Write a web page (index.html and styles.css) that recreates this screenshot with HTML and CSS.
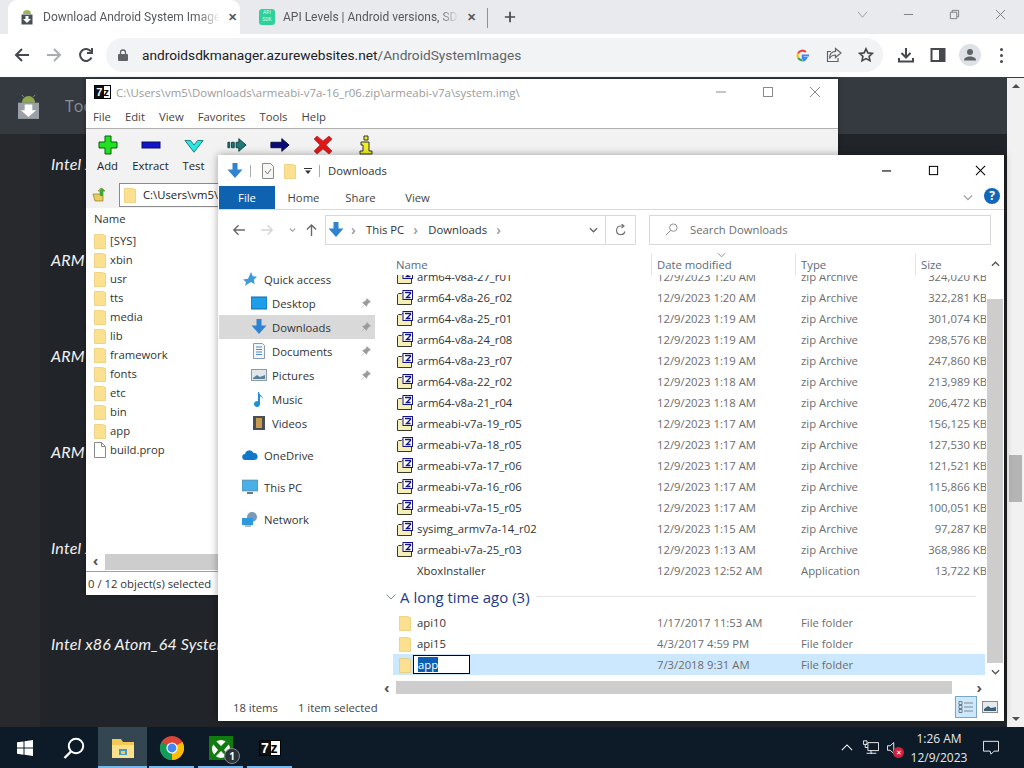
FILE: index.html
```html
<!DOCTYPE html>
<html lang="en">
<head>
    <meta charset="UTF-8">
    <title>Download Android System Images</title>
    <link rel="stylesheet" href="styles.css">
</head>
<body>
    <div class="screen">
        <header class="browser">
            <div class="tabstrip">
                <div class="tab tab-active">
                    <svg class="favicon" viewBox="0 0 16 16"><path d="M4 5a4 4 0 0 1 8 0z" fill="#9db65c"/><rect x="2.500" y="5.500" width="11" height="10" fill="#4a5058"/><path d="M6.500 7h3v3H12l-4 4-4-4h2.500z" fill="#fff"/></svg>
                    <span class="tab-title">Download Android System Images</span>
                    <span class="tab-close">✕</span>
                </div>
                <div class="tab tab-back">
                    <span class="api-icon">API<br>SDK</span>
                    <span class="tab-title">API Levels | Android versions, SDK</span>
                    <span class="tab-close">✕</span>
                </div>
                <span class="tab-sep"></span>
                <svg class="newtab" viewBox="0 0 14 14"><path d="M7 1v12M1 7h12" stroke="#45484c" stroke-width="2"/></svg>
                <div class="win-buttons">
                    <svg viewBox="0 0 12 12"><path d="M1 3l5 6 5-6" fill="none" stroke="#9a9b9e"/></svg>
                    <svg viewBox="0 0 12 12"><path d="M1 6h10" stroke="#77797c"/></svg>
                    <svg viewBox="0 0 12 12"><path d="M1.500 3.500h7v7h-7zM3.500 3.500v-2h7v7h-2" fill="none" stroke="#77797c"/></svg>
                    <svg viewBox="0 0 12 12"><path d="M1 1l10 10M11 1L1 11" stroke="#77797c"/></svg>
                </div>
            </div>
            <div class="toolbar">
                <svg class="nav" viewBox="0 0 16 16"><path d="M15 8H2M8 2L2 8l6 6" fill="none" stroke="#45484c" stroke-width="2"/></svg>
                <svg class="nav" viewBox="0 0 16 16"><path d="M1 8h13M8 2l6 6-6 6" fill="none" stroke="#abaeb1" stroke-width="2"/></svg>
                <svg class="nav" viewBox="0 0 16 16"><path d="M13.500 10.500A6 6 0 1 1 13 4.500M14 1v5H9" fill="none" stroke="#45484c" stroke-width="2"/></svg>
                <div class="omnibox">
                    <svg class="lock" viewBox="0 0 10 12"><path d="M2.500 5V3.500a2.500 2.500 0 0 1 5 0V5" fill="none" stroke="#5f6368" stroke-width="1.300"/><rect y="5" width="10" height="7" rx="1" fill="#5f6368"/></svg>
                    <span class="url"><b>androidsdkmanager.azurewebsites.net</b>/AndroidSystemImages</span>
                    <svg class="g-logo" viewBox="0 0 16 16"><path d="M15 8H8.200v2.600h3.900A4.200 4.200 0 0 1 8 13.200" fill="none" stroke="#4285f4" stroke-width="2.200"/><path d="M8 13.200A5.200 5.200 0 0 1 3.300 10.300" fill="none" stroke="#34a853" stroke-width="2.200"/><path d="M3.300 10.300a5.200 5.200 0 0 1 0-4.600" fill="none" stroke="#fbbc05" stroke-width="2.200"/><path d="M3.300 5.700A5.200 5.200 0 0 1 11.600 4.300" fill="none" stroke="#ea4335" stroke-width="2.200"/></svg>
                    <svg class="omni-icon" viewBox="0 0 16 16"><path d="M9.500 1.500L15 6l-5.500 4.500V8C6 8 4.500 9.500 3.500 11.500 3.500 7 6 4.500 9.500 4.300zM12 11v3.500H1.500V4.500H5" fill="none" stroke="#5f6368" stroke-width="1.200"/></svg>
                    <svg class="omni-icon" viewBox="0 0 16 16"><path d="M8 1.800l1.900 4.100 4.500.5-3.300 3 .9 4.400L8 11.600l-4 2.200.9-4.400-3.300-3 4.500-.5z" fill="none" stroke="#45484c" stroke-width="1.600"/></svg>
                </div>
                <svg class="tool tool-first" viewBox="0 0 16 16"><path d="M8 1v9M3.500 6L8 10.500 12.500 6M1 11v3.500h14V11" fill="none" stroke="#45484c" stroke-width="2"/></svg>
                <svg class="tool" viewBox="0 0 16 16"><rect x="1.500" y="2" width="13" height="12" fill="none" stroke="#45484c" stroke-width="2"/><rect x="9" y="2" width="6" height="12" fill="#45484c"/></svg>
                <span class="avatar"><svg viewBox="0 0 16 16"><circle cx="8" cy="5" r="3" fill="#5f6368"/><path d="M2 13.500c0-3 3-4 6-4s6 1 6 4z" fill="#5f6368"/></svg></span>
                <span class="dots"><i></i><i></i><i></i></span>
            </div>
        </header>

        <main class="page">
            <div class="page-head">
                <svg class="brand" viewBox="0 0 22 26"><path d="M4 9a7 7 0 0 1 14 0z" fill="#8fa84f"/><path d="M6 3L4 1M16 3l2-2" stroke="#8fa84f"/><rect y="9" width="22" height="17" fill="#9aa0a6"/><path d="M7 11h8v6h4l-8 7-8-7h4z" fill="#fff"/></svg>
                <span class="brand-link">Tools</span>
            </div>
            <ul class="image-list">
                <li>Intel x86 Atom System Images</li>
                <li>ARM 64 v8a System Images</li>
                <li>ARM EABI v7a System Images</li>
                <li>ARM EABI System Images</li>
                <li>Intel x86 Atom System Images</li>
                <li>Intel x86 Atom_64 System Images</li>
            </ul>
        </main>
        <div class="page-scroll">
            <span class="arrow-up"></span>
            <span class="page-thumb"></span>
            <span class="arrow-down"></span>
        </div>

        <!-- 7-Zip window -->
        <section class="sevenzip">
            <div class="sz-title">
                <span class="logo-7z small"><span>7</span>z</span>
                <span class="sz-path">C:\Users\vm5\Downloads\armeabi-v7a-16_r06.zip\armeabi-v7a\system.img\</span>
                <div class="sz-buttons">
                    <svg viewBox="0 0 12 12"><path d="M1 6h10" stroke="#8a8a8a"/></svg>
                    <svg viewBox="0 0 12 12"><rect x="1.500" y="1.500" width="9" height="9" fill="none" stroke="#8a8a8a"/></svg>
                    <svg viewBox="0 0 12 12"><path d="M1 1l10 10M11 1L1 11" stroke="#8a8a8a"/></svg>
                </div>
            </div>
            <div class="sz-menu">
                <span>File</span><span>Edit</span><span>View</span><span>Favorites</span><span>Tools</span><span>Help</span>
            </div>
            <div class="sz-tools">
                <div class="sz-tool"><svg viewBox="0 0 20 20"><path d="M7 1h6v6h6v6h-6v6H7v-6H1V7h6z" fill="#22e022" stroke="#0b5e0b"/></svg><span>Add</span></div>
                <div class="sz-tool"><svg viewBox="0 0 20 20"><rect x="1" y="7" width="18" height="6" fill="#1212c8" stroke="#0a0a70"/></svg><span>Extract</span></div>
                <div class="sz-tool"><svg viewBox="0 0 22 20"><path d="M1 5h6l4 5 4-5h6L11 18z" fill="#2ee6e0" stroke="#0c7a78"/></svg><span>Test</span></div>
                <div class="sz-tool"><svg viewBox="0 0 22 20"><path d="M1 7h2v6H1zM5 7h3v6H5zM10 7h3V3l8 7-8 7v-4h-3z" fill="#1f7a78" stroke="#0d3f3e"/></svg></div>
                <div class="sz-tool"><svg viewBox="0 0 22 20"><path d="M1 7h12V3l8 7-8 7v-4H1z" fill="#0a0a78" stroke="#05053f"/></svg></div>
                <div class="sz-tool"><svg viewBox="0 0 20 20"><path d="M4 1l6 5 6-5 3 3-6 6 6 6-3 3-6-5-6 5-3-3 6-6-6-6z" fill="#e01818" stroke="#8c0e0e" stroke-width=".5"/></svg></div>
                <div class="sz-tool"><svg viewBox="0 0 14 20"><path d="M5 1h4v4H5zM2 7h8v9h3v3H1v-3h3v-6H2z" fill="#f0f020" stroke="#333"/></svg></div>
            </div>
            <div class="sz-address">
                <svg class="sz-up" viewBox="0 0 14 16"><path d="M1 7h7V4H6l3-3 4 3h-2v10H3z" fill="#e9cc5c" stroke="#7a6a1c" stroke-width=".6"/><path d="M8 3l2-2 3 3h-2v5H8z" fill="#38a838"/></svg>
                <div class="sz-pathbox">
                    <svg class="folder" viewBox="0 0 12 16"><use href="#folder-shape"/></svg>
                    <span>C:\Users\vm5\Downloads</span>
                </div>
            </div>
            <div class="sz-list">
                <div class="sz-head">Name</div>
                <div class="sz-row"><svg class="folder" viewBox="0 0 12 16"><use href="#folder-shape"/></svg>[SYS]</div>
                <div class="sz-row"><svg class="folder" viewBox="0 0 12 16"><use href="#folder-shape"/></svg>xbin</div>
                <div class="sz-row"><svg class="folder" viewBox="0 0 12 16"><use href="#folder-shape"/></svg>usr</div>
                <div class="sz-row"><svg class="folder" viewBox="0 0 12 16"><use href="#folder-shape"/></svg>tts</div>
                <div class="sz-row"><svg class="folder" viewBox="0 0 12 16"><use href="#folder-shape"/></svg>media</div>
                <div class="sz-row"><svg class="folder" viewBox="0 0 12 16"><use href="#folder-shape"/></svg>lib</div>
                <div class="sz-row"><svg class="folder" viewBox="0 0 12 16"><use href="#folder-shape"/></svg>framework</div>
                <div class="sz-row"><svg class="folder" viewBox="0 0 12 16"><use href="#folder-shape"/></svg>fonts</div>
                <div class="sz-row"><svg class="folder" viewBox="0 0 12 16"><use href="#folder-shape"/></svg>etc</div>
                <div class="sz-row"><svg class="folder" viewBox="0 0 12 16"><use href="#folder-shape"/></svg>bin</div>
                <div class="sz-row"><svg class="folder" viewBox="0 0 12 16"><use href="#folder-shape"/></svg>app</div>
                <div class="sz-row"><svg class="folder" viewBox="0 0 12 16"><path d="M.500.500h7l4 4v11h-11z" fill="#fff" stroke="#8a8a8a"/><path d="M7.500.500v4h4" fill="none" stroke="#8a8a8a"/></svg>build.prop</div>
            </div>
            <div class="sz-hscroll"><span class="hs-left">‹</span><span class="hs-thumb"></span></div>
            <div class="sz-status">0 / 12 object(s) selected</div>
        </section>

        <!-- Explorer window -->
        <section class="explorer">
            <div class="ex-title">
                <svg class="qa-down" viewBox="0 0 16 16"><use href="#down-arrow"/></svg>
                <span class="qa-sep"></span>
                <svg class="qa-check" viewBox="0 0 12 16"><path d="M.500.500h8l3 3v12h-11z" fill="#f6f6f4" stroke="#8a8a8a"/><path d="M3 8l2.500 3L9 6" fill="none" stroke="#7a7a7a"/></svg>
                <svg class="qa-folder" viewBox="0 0 12 16"><use href="#folder-shape"/></svg>
                <svg class="qa-more" viewBox="0 0 8 8"><path d="M0 1.500h8" stroke="#333"/><path d="M1 3.500h6L4 7z" fill="#333"/></svg>
                <span class="qa-sep"></span>
                <span class="ex-name">Downloads</span>
                <div class="ex-buttons">
                    <svg viewBox="0 0 12 12"><path d="M1 6.500h10" stroke="#000" stroke-width="1.200"/></svg>
                    <svg viewBox="0 0 12 12"><rect x="1.500" y="1.500" width="9" height="9" fill="none" stroke="#000" stroke-width="1.100"/></svg>
                    <svg viewBox="0 0 12 12"><path d="M1 1l10 10M11 1L1 11" stroke="#000" stroke-width="1.100"/></svg>
                </div>
            </div>
            <div class="ex-ribbon">
                <span class="rb-file">File</span>
                <span class="rb-tab">Home</span>
                <span class="rb-tab">Share</span>
                <span class="rb-tab">View</span>
                <svg class="rb-chev" viewBox="0 0 12 8"><path d="M1 1.500l5 5 5-5" fill="none" stroke="#9a9a9a" stroke-width="1.500"/></svg>
                <span class="rb-help">?</span>
            </div>
            <div class="ex-address">
                <svg class="ex-nav" viewBox="0 0 14 12"><path d="M14 6H2M7 1L2 6l5 5" fill="none" stroke="#6a6a6a" stroke-width="1.500"/></svg>
                <svg class="ex-nav" viewBox="0 0 14 12"><path d="M0 6h12M7 1l5 5-5 5" fill="none" stroke="#d4d4d4" stroke-width="1.500"/></svg>
                <svg class="ex-recent" viewBox="0 0 8 6"><path d="M1 1.500l3 3 3-3" fill="none" stroke="#9a9a9a" stroke-width="1.300"/></svg>
                <svg class="ex-nav ex-upbtn" viewBox="0 0 12 14"><path d="M6 14V2M1 7l5-5 5 5" fill="none" stroke="#6a6a6a" stroke-width="1.500"/></svg>
                <div class="ex-crumbs">
                    <svg class="crumb-icon" viewBox="0 0 16 16"><use href="#down-arrow"/></svg>
                    <span class="crumb-sep">›</span>
                    <span>This PC</span>
                    <span class="crumb-sep">›</span>
                    <span>Downloads</span>
                    <span class="crumb-sep">›</span>
                    <svg class="crumb-drop" viewBox="0 0 10 6"><path d="M1 1l4 4 4-4" fill="none" stroke="#666" stroke-width="1.500"/></svg>
                </div>
                <div class="ex-refresh"><svg viewBox="0 0 12 12"><path d="M10 7.500A4.300 4.300 0 1 1 6 2h2M6.500 0l2.500 2-2.500 2" fill="none" stroke="#777" stroke-width="1.200"/></svg></div>
                <div class="ex-search">
                    <svg viewBox="0 0 14 14"><circle cx="9" cy="5" r="4" fill="none" stroke="#888"/><path d="M6 8l-5 5" stroke="#888"/></svg>
                    <span>Search Downloads</span>
                </div>
            </div>
            <div class="ex-body">
                <nav class="ex-nav-pane">
                    <div class="nav-row nav-top"><svg class="nav-ico" viewBox="0 0 16 16"><path d="M9 1l1.800 4.200 4.200.5-3.200 3 .9 4.500L9 11l-4 2.400L3 15l1-4-3-2.500 5-.8z" fill="#3d9bd9"/></svg>Quick access</div>
                    <div class="nav-row nav-sub"><svg class="nav-ico" viewBox="0 0 16 16"><rect y="2" width="16" height="12" fill="#1e9ee8" stroke="#0b6fb0"/></svg>Desktop<svg class="pin" viewBox="0 0 10 10"><use href="#pin-shape"/></svg></div>
                    <div class="nav-row nav-sub is-current"><svg class="nav-ico" viewBox="0 0 16 16"><use href="#down-arrow"/></svg>Downloads<svg class="pin" viewBox="0 0 10 10"><use href="#pin-shape"/></svg></div>
                    <div class="nav-row nav-sub"><svg class="nav-ico" viewBox="0 0 16 16"><path d="M2.500.500h9l2 2v13h-11z" fill="#f2f6fa" stroke="#8a9aa8"/><path d="M5 4h6M5 6.500h6M5 9h6M5 11.500h6" stroke="#4a90c8"/></svg>Documents<svg class="pin" viewBox="0 0 10 10"><use href="#pin-shape"/></svg></div>
                    <div class="nav-row nav-sub"><svg class="nav-ico" viewBox="0 0 16 16"><rect x=".5" y="2.500" width="15" height="11" fill="#dfe7ec" stroke="#8a9aa8"/><path d="M2 11l4-3 3 2 5-2v4H2z" fill="#5a7f96"/></svg>Pictures<svg class="pin" viewBox="0 0 10 10"><use href="#pin-shape"/></svg></div>
                    <div class="nav-row nav-sub"><svg class="nav-ico" viewBox="0 0 16 16"><path d="M8 1c0 3 4 4 4 7-1-2-2-2.500-3-2.500V13a3 3 0 1 1-2-2.800V1z" fill="#1e90d8"/></svg>Music</div>
                    <div class="nav-row nav-sub"><svg class="nav-ico" viewBox="0 0 16 16"><rect x="2" y="1" width="12" height="14" fill="#4a4f55"/><rect x="5" y="3" width="6" height="10" fill="#c89a50"/></svg>Videos</div>
                    <div class="nav-row nav-top nav-gap"><svg class="nav-ico" viewBox="0 0 16 16"><path d="M3.500 13a3 3 0 0 1-.5-6 4.500 4.500 0 0 1 8.500-1A3.500 3.500 0 0 1 12.500 13z" fill="#0f78c8"/></svg>OneDrive</div>
                    <div class="nav-row nav-top nav-gap"><svg class="nav-ico" viewBox="0 0 16 16"><rect y="1" width="16" height="11" fill="#4ab0e8" stroke="#6a7a88" stroke-width=".6"/><path d="M5 14h6" stroke="#6a7a88" stroke-width="2"/></svg>This PC</div>
                    <div class="nav-row nav-top nav-gap"><svg class="nav-ico" viewBox="0 0 16 16"><circle cx="10" cy="6" r="5" fill="#7a9ab8"/><rect y="7" width="11" height="7" fill="#2f97dc"/><path d="M3 15h6" stroke="#6a7a88"/></svg>Network</div>
                </nav>
                <div class="ex-files">
                    <div class="col-head">
                        <span class="col-name">Name</span>
                        <span class="col-date">Date modified</span>
                        <span class="col-type">Type</span>
                        <span class="col-size">Size</span>
                    </div>
                    <svg class="col-sort" viewBox="0 0 10 6"><path d="M1 1l4 4 4-4" fill="none" stroke="#888"/></svg>
                    <div class="file-view">
                        <div class="file-row clip-top"><span class="file-name"><svg class="zip-icon" viewBox="0 0 16 16"><use href="#zip-shape"/></svg>arm64-v8a-27_r01</span><span>12/9/2023 1:20 AM</span><span>zip Archive</span><span class="file-size">324,020 KB</span></div>
                        <div class="file-row"><span class="file-name"><svg class="zip-icon" viewBox="0 0 16 16"><use href="#zip-shape"/></svg>arm64-v8a-26_r02</span><span>12/9/2023 1:20 AM</span><span>zip Archive</span><span class="file-size">322,281 KB</span></div>
                        <div class="file-row"><span class="file-name"><svg class="zip-icon" viewBox="0 0 16 16"><use href="#zip-shape"/></svg>arm64-v8a-25_r01</span><span>12/9/2023 1:19 AM</span><span>zip Archive</span><span class="file-size">301,074 KB</span></div>
                        <div class="file-row"><span class="file-name"><svg class="zip-icon" viewBox="0 0 16 16"><use href="#zip-shape"/></svg>arm64-v8a-24_r08</span><span>12/9/2023 1:19 AM</span><span>zip Archive</span><span class="file-size">298,576 KB</span></div>
                        <div class="file-row"><span class="file-name"><svg class="zip-icon" viewBox="0 0 16 16"><use href="#zip-shape"/></svg>arm64-v8a-23_r07</span><span>12/9/2023 1:19 AM</span><span>zip Archive</span><span class="file-size">247,860 KB</span></div>
                        <div class="file-row"><span class="file-name"><svg class="zip-icon" viewBox="0 0 16 16"><use href="#zip-shape"/></svg>arm64-v8a-22_r02</span><span>12/9/2023 1:18 AM</span><span>zip Archive</span><span class="file-size">213,989 KB</span></div>
                        <div class="file-row"><span class="file-name"><svg class="zip-icon" viewBox="0 0 16 16"><use href="#zip-shape"/></svg>arm64-v8a-21_r04</span><span>12/9/2023 1:18 AM</span><span>zip Archive</span><span class="file-size">206,472 KB</span></div>
                        <div class="file-row"><span class="file-name"><svg class="zip-icon" viewBox="0 0 16 16"><use href="#zip-shape"/></svg>armeabi-v7a-19_r05</span><span>12/9/2023 1:17 AM</span><span>zip Archive</span><span class="file-size">156,125 KB</span></div>
                        <div class="file-row"><span class="file-name"><svg class="zip-icon" viewBox="0 0 16 16"><use href="#zip-shape"/></svg>armeabi-v7a-18_r05</span><span>12/9/2023 1:17 AM</span><span>zip Archive</span><span class="file-size">127,530 KB</span></div>
                        <div class="file-row"><span class="file-name"><svg class="zip-icon" viewBox="0 0 16 16"><use href="#zip-shape"/></svg>armeabi-v7a-17_r06</span><span>12/9/2023 1:17 AM</span><span>zip Archive</span><span class="file-size">121,521 KB</span></div>
                        <div class="file-row"><span class="file-name"><svg class="zip-icon" viewBox="0 0 16 16"><use href="#zip-shape"/></svg>armeabi-v7a-16_r06</span><span>12/9/2023 1:17 AM</span><span>zip Archive</span><span class="file-size">115,866 KB</span></div>
                        <div class="file-row"><span class="file-name"><svg class="zip-icon" viewBox="0 0 16 16"><use href="#zip-shape"/></svg>armeabi-v7a-15_r05</span><span>12/9/2023 1:17 AM</span><span>zip Archive</span><span class="file-size">100,051 KB</span></div>
                        <div class="file-row"><span class="file-name"><svg class="zip-icon" viewBox="0 0 16 16"><use href="#zip-shape"/></svg>sysimg_armv7a-14_r02</span><span>12/9/2023 1:15 AM</span><span>zip Archive</span><span class="file-size">97,287 KB</span></div>
                        <div class="file-row"><span class="file-name"><svg class="zip-icon" viewBox="0 0 16 16"><use href="#zip-shape"/></svg>armeabi-v7a-25_r03</span><span>12/9/2023 1:13 AM</span><span>zip Archive</span><span class="file-size">368,986 KB</span></div>
                        <div class="file-row"><span class="file-name"><span class="no-icon"></span>XboxInstaller</span><span>12/9/2023 12:52 AM</span><span>Application</span><span class="file-size">13,722 KB</span></div>
                        <div class="group-head"><svg viewBox="0 0 10 6"><path d="M.5.5L5 5 9.500.5" fill="none" stroke="#7a8a9a"/></svg>A long time ago (3)<i></i></div>
                        <div class="file-row"><span class="file-name"><svg class="folder" viewBox="0 0 12 16"><use href="#folder-shape"/></svg>api10</span><span>1/17/2017 11:53 AM</span><span>File folder</span><span></span></div>
                        <div class="file-row"><span class="file-name"><svg class="folder" viewBox="0 0 12 16"><use href="#folder-shape"/></svg>api15</span><span>4/3/2017 4:59 PM</span><span>File folder</span><span></span></div>
                        <div class="file-row is-selected"><span class="file-name"><svg class="folder" viewBox="0 0 12 16"><use href="#folder-shape"/></svg><span class="rename-box"><mark>app</mark></span></span><span>7/3/2018 9:31 AM</span><span>File folder</span><span></span></div>
                    </div>
                    <div class="ex-hscroll">
                        <span class="hs-arrow">‹</span><span class="ex-hthumb"></span><span class="hs-arrow hs-right">›</span>
                    </div>
                </div>
                <div class="ex-vscroll">
                    <svg viewBox="0 0 10 6"><path d="M1 5l4-4 4 4" fill="none" stroke="#555" stroke-width="1.500"/></svg>
                    <span class="ex-vthumb"></span>
                    <svg viewBox="0 0 10 6"><path d="M1 1l4 4 4-4" fill="none" stroke="#555" stroke-width="1.500"/></svg>
                </div>
            </div>
            <div class="ex-status">
                <span>18 items</span>
                <span class="st-selected">1 item selected</span>
                <span class="view-btn view-on"><svg viewBox="0 0 16 14"><path d="M1 1.500h3v3H1zM1 5.500h3v3H1zM1 9.500h3v3H1z" fill="none" stroke="#555" stroke-width=".7"/><path d="M6 3h9M6 7h9M6 11h9" stroke="#888"/></svg></span>
                <span class="view-btn"><svg viewBox="0 0 16 14"><rect x=".5" y="1.500" width="15" height="11" fill="#e6eaee" stroke="#8a8a8a"/><path d="M2 9l4-3 3 2 5-1v4H2z" fill="#3c5f78"/></svg></span>
            </div>
        </section>

        <footer class="taskbar">
            <span class="tb-btn"><svg class="tb-win" viewBox="0 0 16 16"><path d="M0 2.300l6.500-.9v6.200H0zM7.500 1.300L16 0v7.600H7.500zM0 8.500h6.500v6.200L0 13.800zM7.500 8.500H16V16l-8.500-1.300z" fill="#fff"/></svg></span>
            <span class="tb-btn"><svg class="tb-search" viewBox="0 0 22 22"><circle cx="13" cy="9" r="7.200" fill="none" stroke="#fff" stroke-width="2"/><path d="M8 14.500L1.500 21" stroke="#fff" stroke-width="2.400"/></svg></span>
            <span class="tb-btn is-open is-active"><svg viewBox="0 0 24 22"><path d="M1 2h9l2 3h11v16H1z" fill="#f2c955"/><rect x="1" y="8" width="22" height="13" fill="#ffe08a"/><rect x="8" y="12" width="8" height="6" fill="#3f9bd0"/><rect x="10" y="14" width="4" height="3" fill="#f2c955"/></svg></span>
            <span class="tb-btn is-open"><svg viewBox="0 0 24 24"><circle cx="12" cy="12" r="12" fill="#db4437"/><path d="M12 12L22.400 6A12 12 0 0 1 12 24z" fill="#fbbc05"/><path d="M12 12L12 24A12 12 0 0 1 1.600 6z" fill="#0f9d58"/><circle cx="12" cy="12" r="5.600" fill="#fff"/><circle cx="12" cy="12" r="4.400" fill="#4285f4"/></svg></span>
            <span class="tb-btn is-open"><svg viewBox="0 0 24 24"><rect width="24" height="24" fill="#107c10"/><circle cx="12" cy="13" r="9" fill="#fff"/><path d="M12 10L7 5l-3 3 5 6-5 6h3l5-5 5 5h3l-5-6 5-6-3-3z" fill="#107c10"/></svg><span class="tb-badge">1</span></span>
            <span class="tb-btn is-open"><span class="logo-7z large"><span>7</span>z</span></span>
            <div class="tray">
                <svg class="tray-up" viewBox="0 0 14 8"><path d="M1 7l6-6 6 6" fill="none" stroke="#fff" stroke-width="1.200"/></svg>
                <svg class="tray-net" viewBox="0 0 18 16"><path d="M5.500 2.500h12v9h-12zM0.500 .5h4v4h-4zM2.500 4.500V8h3M9 11.500v3h6M4 14.500h6" fill="none" stroke="#fff"/></svg>
                <span class="tray-sound"><svg viewBox="0 0 10 14"><path d="M.5 4.500h3l4-3.500v12l-4-3.500h-3z" fill="none" stroke="#fff"/></svg><span class="mute">✕</span></span>
                <div class="clock"><span>1:26 AM</span><span>12/9/2023</span></div>
                <svg class="tray-notes" viewBox="0 0 18 16"><path d="M.5.500h17v11h-5l-3.500 3.500-1-3.500h-7.500z" fill="none" stroke="#fff"/></svg>
            </div>
        </footer>
    </div>

    <svg class="defs" width="0" height="0">
        <defs>
            <g id="folder-shape"><path d="M.5 1.500h7.500l3.500 1v13H.5z" fill="#fbe08f" stroke="#e8c76a" stroke-width=".7"/></g>
            <g id="down-arrow"><path d="M5.500 0h5v6.500h5L8 15 .5 6.500h5z" fill="#2f83d0"/></g>
            <g id="pin-shape"><path d="M6 .5L9.500 4 8 4.500 6 7 5.500 8.500 1.500 4.500 3 4l2.500-2zM3 7L.5 9.500" fill="#9a9a9a" stroke="#9a9a9a" stroke-width=".5"/></g>
            <g id="zip-shape"><path d="M.5 4.500l1-1h3l1-1h9v12h-14z" fill="#f6f0b8" stroke="#3a3a2a"/><rect x="6" y="0.500" width="9.500" height="9" fill="#fff" stroke="#16168c"/><path d="M8 2.500h5.500v1L9.500 7.500h4" fill="none" stroke="#16168c" stroke-width="1.300"/></g>
        </defs>
    </svg>
</body>
</html>
```

FILE: styles.css
```css
* {
    margin: 0;
    padding: 0;
    box-sizing: border-box;
}

html, body {
    height: 768px;
    overflow: hidden;
}

body {
    font-family: "Open Sans", "Noto Sans", sans-serif;
    font-size: 11.3px;
    color: #222;
    background: #212529;
}

.screen {
    position: relative;
    width: 1024px;
    height: 768px;
    overflow: hidden;
}

.defs {
    position: absolute;
}

/* browser chrome */
.browser {
    position: absolute;
    top: 0;
    left: 0;
    width: 1024px;
    height: 78px;
    background: #fff;
    border-bottom: 1px solid #3a3d41;
}

.tabstrip {
    display: flex;
    align-items: flex-end;
    height: 34px;
    background: #e8eaed;
    padding-left: 8px;
}

.tab {
    display: flex;
    align-items: center;
    width: 232px;
    height: 34px;
    padding: 0 1px 0 11px;
    gap: 6px;
    color: #55585c;
    font-family: "Roboto", sans-serif;
    font-size: 12px;
}

.tab-back {
    width: 247px;
    padding: 0 9px 0 19px;
}

.tab-active {
    background: #fff;
    border-radius: 9px 9px 0 0;
}

.favicon {
    width: 16px;
    height: 16px;
    flex: none;
}

.api-icon {
    width: 16px;
    height: 16px;
    flex: none;
    border-radius: 3px;
    background: #2fd09a;
    color: #d8fff0;
    font-size: 5px;
    line-height: 7px;
    text-align: center;
}

.tab-title {
    flex: 1;
    overflow: hidden;
    white-space: nowrap;
    padding-left: 2px;
    -webkit-mask-image: linear-gradient(to right, #000 88%, transparent);
    mask-image: linear-gradient(to right, #000 88%, transparent);
}

.tab-close {
    color: #55585c;
    font-size: 11px;
    font-weight: 700;
    padding: 0 2px;
}

.tab-sep {
    width: 1px;
    height: 20px;
    margin-bottom: 6px;
    background: #8e9094;
}

.newtab {
    width: 12px;
    height: 12px;
    margin: 0 0 11px 16px;
}

.win-buttons {
    display: flex;
    margin-left: auto;
    height: 100%;
    align-items: center;
    gap: 35px;
    padding: 0 18px 6px 0;
}

.win-buttons svg {
    width: 11px;
    height: 11px;
}

.toolbar {
    display: flex;
    align-items: center;
    height: 42px;
    padding-left: 14px;
}

.nav {
    width: 16px;
    height: 16px;
    margin-right: 16px;
}

.omnibox {
    display: flex;
    align-items: center;
    width: 777px;
    height: 34px;
    margin-left: -4px;
    padding-left: 12px;
    border-radius: 17px;
    background: #f1f3f4;
    font-family: "Roboto", sans-serif;
    font-size: 13.7px;
    color: #5f6368;
}

.lock {
    width: 10px;
    height: 12px;
    margin-right: 14px;
    flex: none;
}

.url {
    flex: 1;
    white-space: nowrap;
}

.url b {
    font-weight: 400;
    color: #202124;
}

.g-logo {
    width: 15px;
    height: 15px;
}

.omni-icon {
    width: 16px;
    height: 16px;
    margin-left: 16px;
}

.omni-icon:last-child {
    margin-right: 9px;
}

.tool {
    width: 16px;
    height: 16px;
    margin-left: 16px;
}

.tool-first {
    margin-left: 15px;
}

.avatar {
    width: 22px;
    height: 22px;
    margin-left: 13px;
    padding: 3px;
    border-radius: 50%;
    background: #dee1e6;
}

.avatar svg {
    display: block;
}

.dots {
    display: flex;
    flex-direction: column;
    gap: 3px;
    margin-left: 19px;
}

.dots i {
    width: 3px;
    height: 3px;
    border-radius: 50%;
    background: #45484c;
}

/* website behind the windows */
.page {
    position: absolute;
    top: 78px;
    left: 0;
    width: 1007px;
    height: 649px;
    background: linear-gradient(to right, #27292c 40px, #212529 40px);
}

.page-head {
    display: flex;
    align-items: center;
    height: 56px;
    padding-left: 18px;
    background: #343a40;
}

.brand {
    width: 21px;
    height: 25px;
}

.brand-link {
    margin-left: 26px;
    font-size: 16px;
    color: #8b9096;
}

.image-list {
    list-style: none;
    padding: 18px 0 0 51px;
    display: flex;
    flex-direction: column;
    gap: 72px;
    font-family: "Lato", sans-serif;
    font-size: 16px;
    font-style: italic;
    line-height: 24px;
    letter-spacing: .2px;
    color: #f2f2f2;
}

.page-scroll {
    position: absolute;
    top: 78px;
    right: 0;
    width: 17px;
    height: 649px;
    background: #f1f1f1;
    display: flex;
    flex-direction: column;
    align-items: center;
    justify-content: space-between;
    padding: 6px 0;
}

.arrow-up, .arrow-down {
    border-left: 4px solid transparent;
    border-right: 4px solid transparent;
}

.arrow-up {
    border-bottom: 4px solid #505050;
}

.arrow-down {
    border-top: 4px solid #505050;
}

.page-thumb {
    position: absolute;
    top: 377px;
    left: 2px;
    width: 13px;
    height: 47px;
    background: #b4b4b4;
}

/* 7-zip */
.logo-7z {
    display: inline-flex;
    justify-content: flex-end;
    background: #fff;
    border: 1px solid #000;
    color: #000;
    font-family: "Liberation Sans", sans-serif;
    font-weight: 700;
}

.logo-7z span {
    flex: 1;
    background: #111;
    color: #fff;
    text-align: center;
}

.logo-7z.small {
    width: 17px;
    height: 14px;
    padding-right: 1px;
    font-size: 11px;
    line-height: 12px;
}

.logo-7z.large {
    width: 22px;
    height: 16px;
    padding-right: 2px;
    font-size: 14px;
    line-height: 14px;
}

.sevenzip {
    position: absolute;
    left: 86px;
    top: 79px;
    width: 752px;
    height: 516px;
    background: #fff;
    box-shadow: 0 0 4px rgba(0, 0, 0, .4);
}

.sz-title {
    display: flex;
    align-items: center;
    height: 26px;
    padding-left: 8px;
    color: #9b9b9b;
}

.sz-path {
    margin-left: 5px;
    font-size: 11.45px;
}

.sz-buttons {
    display: flex;
    gap: 35px;
    margin-left: auto;
    padding-right: 17px;
}

.sz-buttons svg {
    width: 12px;
    height: 12px;
}

.sz-menu {
    display: flex;
    gap: 14px;
    height: 24px;
    padding: 4px 0 0 7px;
    color: #444;
    border-bottom: 1px solid #b0b0b0;
}

.sz-tools {
    display: flex;
    height: 52px;
    padding: 6px 0 0 0;
    background: #f2f2f2;
}

.sz-tool {
    display: flex;
    flex-direction: column;
    align-items: center;
    width: 43px;
    gap: 3px;
}

.sz-tool svg {
    width: 20px;
    height: 20px;
    flex: none;
}

.sz-address {
    display: flex;
    align-items: center;
    height: 27px;
    background: #f2f2f2;
    padding-left: 6px;
    gap: 13px;
}

.sz-up {
    width: 14px;
    height: 16px;
}

.sz-pathbox {
    flex: 1;
    display: flex;
    align-items: center;
    gap: 7px;
    height: 24px;
    padding-left: 4px;
    background: #fff;
    border: 1px solid #8a8a8a;
}

.folder {
    width: 12px;
    height: 16px;
    flex: none;
}

.sz-list {
    height: 346px;
    padding: 4px 0 0 8px;
}

.sz-head {
    height: 19px;
    color: #333;
    line-height: 14px;
}

.sz-row {
    display: flex;
    align-items: center;
    gap: 4px;
    height: 19px;
    color: #333;
}

.sz-hscroll {
    display: flex;
    height: 16px;
}

.hs-left {
    width: 19px;
    text-align: center;
    font-size: 15px;
    line-height: 13px;
    font-weight: 700;
    color: #555;
}

.hs-thumb {
    flex: 1;
    background: #cdcdcd;
}

.sz-status {
    margin-top: 1px;
    height: 23px;
    padding: 4px 0 0 2px;
    border-top: 1px solid #a0a0a0;
    color: #333;
    white-space: nowrap;
}

/* explorer */
.explorer {
    position: absolute;
    left: 218px;
    top: 155px;
    width: 786px;
    height: 566px;
    display: flex;
    flex-direction: column;
    background: #fff;
    box-shadow: 3px 0 0 #1b1c1e, 0 0 8px rgba(0, 0, 0, .35);
}

.ex-title {
    display: flex;
    align-items: center;
    height: 31px;
    padding-left: 9px;
    color: #333;
}

.qa-down {
    width: 16px;
    height: 16px;
}

.qa-sep {
    width: 1px;
    height: 12px;
    margin: 0 7px;
    background: #aaa;
}

.qa-check {
    width: 12px;
    height: 16px;
    margin-left: 4px;
}

.qa-folder {
    width: 12px;
    height: 16px;
    margin-left: 10px;
}

.qa-more {
    width: 8px;
    height: 8px;
    margin-left: 8px;
}

.ex-name {
    padding-left: 1px;
}

.ex-buttons {
    display: flex;
    gap: 36px;
    margin-left: auto;
    padding-right: 18px;
}

.ex-buttons svg {
    width: 11px;
    height: 11px;
}

.ex-ribbon {
    display: flex;
    align-items: center;
    height: 24px;
    padding-right: 4px;
    border-bottom: 1px solid #d9d9d9;
    color: #444;
}

.rb-file {
    width: 56px;
    height: 23px;
    margin-left: 1px;
    line-height: 23px;
    text-align: center;
    background: #0f62b0;
    color: #fff;
}

.rb-tab {
    width: 57px;
    text-align: center;
}

.rb-chev {
    width: 10px;
    height: 7px;
    margin-left: auto;
    margin-right: 11px;
}

.rb-help {
    width: 16px;
    height: 16px;
    margin-top: -4px;
    border-radius: 50%;
    background: #1167b8;
    color: #fff;
    font-size: 12px;
    font-weight: 700;
    line-height: 16px;
    text-align: center;
}

.ex-address {
    display: flex;
    align-items: center;
    height: 41px;
    padding: 3px 0 5px 14px;
}

.ex-nav {
    width: 13px;
    height: 12px;
    margin-right: 16px;
    flex: none;
}

.ex-recent {
    width: 7px;
    height: 6px;
    margin: 0 10px 0 -1px;
    flex: none;
}

.ex-upbtn {
    width: 11px;
    height: 13px;
    margin-right: 8px;
}

.ex-crumbs {
    display: flex;
    align-items: center;
    width: 281px;
    height: 30px;
    padding-left: 2px;
    border: 1px solid #d9d9d9;
    color: #333;
}

.crumb-icon {
    width: 16px;
    height: 16px;
    margin-right: -2px;
}

.crumb-sep {
    width: 5px;
    margin: 0 10px 0 9px;
    color: #999;
    font-size: 14px;
    font-weight: 600;
    line-height: 16px;
}

.crumb-drop {
    width: 9px;
    height: 6px;
    margin-left: auto;
    margin-right: 7px;
}

.ex-refresh {
    display: flex;
    align-items: center;
    justify-content: center;
    width: 30px;
    height: 30px;
    border: 1px solid #d9d9d9;
    border-left: 0;
}

.ex-refresh svg {
    width: 12px;
    height: 12px;
}

.ex-search {
    display: flex;
    align-items: center;
    gap: 12px;
    width: 342px;
    height: 30px;
    margin-left: 13px;
    padding-left: 15px;
    border: 1px solid #d9d9d9;
    color: #6d6d6d;
}

.ex-search svg {
    width: 13px;
    height: 13px;
}

.ex-body {
    position: relative;
    flex: 1;
    display: flex;
    min-height: 0;
}

.ex-nav-pane {
    width: 162px;
    padding-top: 16px;
    flex: none;
}

.nav-row {
    display: flex;
    align-items: center;
    height: 24px;
    color: #333;
}

.nav-top {
    padding-left: 24px;
    gap: 6px;
}

.nav-sub {
    padding-left: 33px;
    gap: 5px;
    width: 157px;
    position: relative;
}

.nav-sub.is-current {
    width: 156px;
    margin-left: 1px;
    padding-left: 32px;
    background: #d9d9d9;
}

.nav-gap {
    margin-top: 8px;
}

.nav-ico {
    width: 16px;
    height: 16px;
    flex: none;
}

.pin {
    position: absolute;
    right: 4px;
    top: 7px;
    width: 10px;
    height: 10px;
}

.ex-files {
    position: relative;
    flex: 1;
    min-width: 0;
    display: flex;
    flex-direction: column;
}

.col-head {
    display: grid;
    grid-template-columns: 261px 144px 120px 1fr;
    height: 24px;
    flex: none;
    padding: 6px 0 0 16px;
    line-height: 16px;
    color: #5a6a7a;
}

.col-head span {
    position: relative;
    white-space: nowrap;
}

.col-date::before, .col-type::before, .col-size::before {
    content: "";
    position: absolute;
    left: -6px;
    top: -3px;
    width: 1px;
    height: 22px;
    background: #e5e5e5;
}

.col-sort {
    position: absolute;
    left: 337px;
    top: 1px;
    width: 9px;
    height: 6px;
}

.file-view {
    height: 402px;
    flex: none;
    overflow: hidden;
}

.file-view .clip-top {
    margin-top: -9px;
}

.file-row {
    display: grid;
    grid-template-columns: 260px 144px 103px 83px;
    align-items: center;
    height: 21px;
    padding-left: 17px;
    color: #6d6d6d;
    white-space: nowrap;
}

.file-row.is-selected {
    background: #cce8ff;
    width: 592px;
    margin-left: 13px;
    padding-left: 4px;
}

.file-name {
    display: flex;
    align-items: center;
    gap: 4px;
    color: #333;
}

.file-name .folder {
    margin: 0 2px;
}

.zip-icon {
    width: 16px;
    height: 16px;
    flex: none;
}

.no-icon {
    width: 16px;
    flex: none;
}

.file-size {
    text-align: right;
}

.group-head {
    display: flex;
    align-items: center;
    height: 31px;
    padding-left: 6px;
    color: #24398a;
    font-size: 15px;
    gap: 4px;
}

.group-head svg {
    width: 10px;
    height: 6px;
}

.group-head i {
    flex: 1;
    height: 1px;
    margin: 0 10px 0 2px;
    background: #e6e6e6;
}

.rename-box {
    display: inline-block;
    width: 57px;
    height: 19px;
    margin-left: -4px;
    padding-left: 4px;
    background: #fff;
    border: 1px solid #000;
    line-height: 17px;
}

.rename-box mark {
    background: #0a5fb4;
    color: #fff;
}

.ex-hscroll {
    display: flex;
    height: 15px;
    margin: 4px 0 0 3px;
    width: 602px;
}

.hs-arrow {
    width: 13px;
    font-size: 15px;
    font-weight: 700;
    line-height: 13px;
    color: #555;
    padding-left: 1px;
}

.hs-right {
    width: 18px;
    text-align: right;
    margin-left: auto;
    padding-right: 3px;
}

.ex-hthumb {
    width: 556px;
    background: #cdcdcd;
}

.ex-vscroll {
    display: flex;
    flex-direction: column;
    align-items: center;
    justify-content: space-between;
    width: 16px;
    height: 420px;
    margin: 7px 1px 0 1px;
    padding: 3px 0;
    position: relative;
}

.ex-vscroll svg {
    width: 9px;
    height: 6px;
}

.ex-vthumb {
    position: absolute;
    top: 41px;
    left: 0;
    width: 16px;
    height: 364px;
    background: #cdcdcd;
}

.ex-status {
    display: flex;
    align-items: center;
    height: 28px;
    padding: 0 3px 0 15px;
    flex: none;
    color: #444;
}

.st-selected {
    margin-left: 20px;
}

.view-btn {
    width: 22px;
    height: 22px;
    padding: 3px;
}

.view-on {
    margin-left: auto;
    margin-right: 2px;
    background: #cce8ff;
    border: 1px solid #7aa7c7;
    padding: 2px;
}

.view-btn svg {
    display: block;
    width: 100%;
    height: 100%;
}

/* taskbar */
.taskbar {
    position: absolute;
    bottom: 0;
    left: 0;
    width: 1024px;
    height: 41px;
    display: flex;
    background: #0d1a27;
    color: #fff;
}

.tb-btn {
    position: relative;
    display: flex;
    align-items: center;
    justify-content: center;
    width: 49px;
    height: 41px;
}

.tb-btn svg {
    width: 24px;
    height: 24px;
}

.tb-btn .tb-win {
    width: 16px;
    height: 16px;
}

.tb-btn .tb-search {
    width: 22px;
    height: 22px;
}

.is-open::after {
    content: "";
    position: absolute;
    left: 2px;
    right: 2px;
    bottom: 0;
    height: 2px;
    background: #76b9ed;
}

.is-active {
    background: #344652;
}

.is-active::after {
    left: 0;
    right: 0;
}

.tb-badge {
    position: absolute;
    right: 5px;
    bottom: 4px;
    width: 16px;
    height: 16px;
    border-radius: 50%;
    border: 1px solid #888;
    background: #2a3338;
    font-size: 10px;
    font-weight: 700;
    line-height: 14px;
    text-align: center;
}

.tray {
    display: flex;
    align-items: center;
    margin-left: auto;
    padding-right: 25px;
}

.tray-up {
    width: 12px;
    height: 7px;
}

.tray-net {
    width: 16px;
    height: 15px;
    margin-left: 10px;
}

.tray-sound {
    position: relative;
    margin-left: 8px;
    width: 16px;
    height: 14px;
}

.tray-sound svg {
    display: block;
    width: 9px;
    height: 14px;
}

.mute {
    position: absolute;
    right: -1px;
    bottom: -3px;
    width: 11px;
    height: 11px;
    border-radius: 50%;
    background: #d0213a;
    font-size: 7px;
    line-height: 11px;
    text-align: center;
}

.clock {
    display: flex;
    flex-direction: column;
    align-items: center;
    width: 60px;
    margin-left: 6px;
    font-size: 12px;
    line-height: 19px;
    color: #e8e8e8;
}

.tray-notes {
    width: 16px;
    height: 16px;
    margin-left: 14px;
}
```
